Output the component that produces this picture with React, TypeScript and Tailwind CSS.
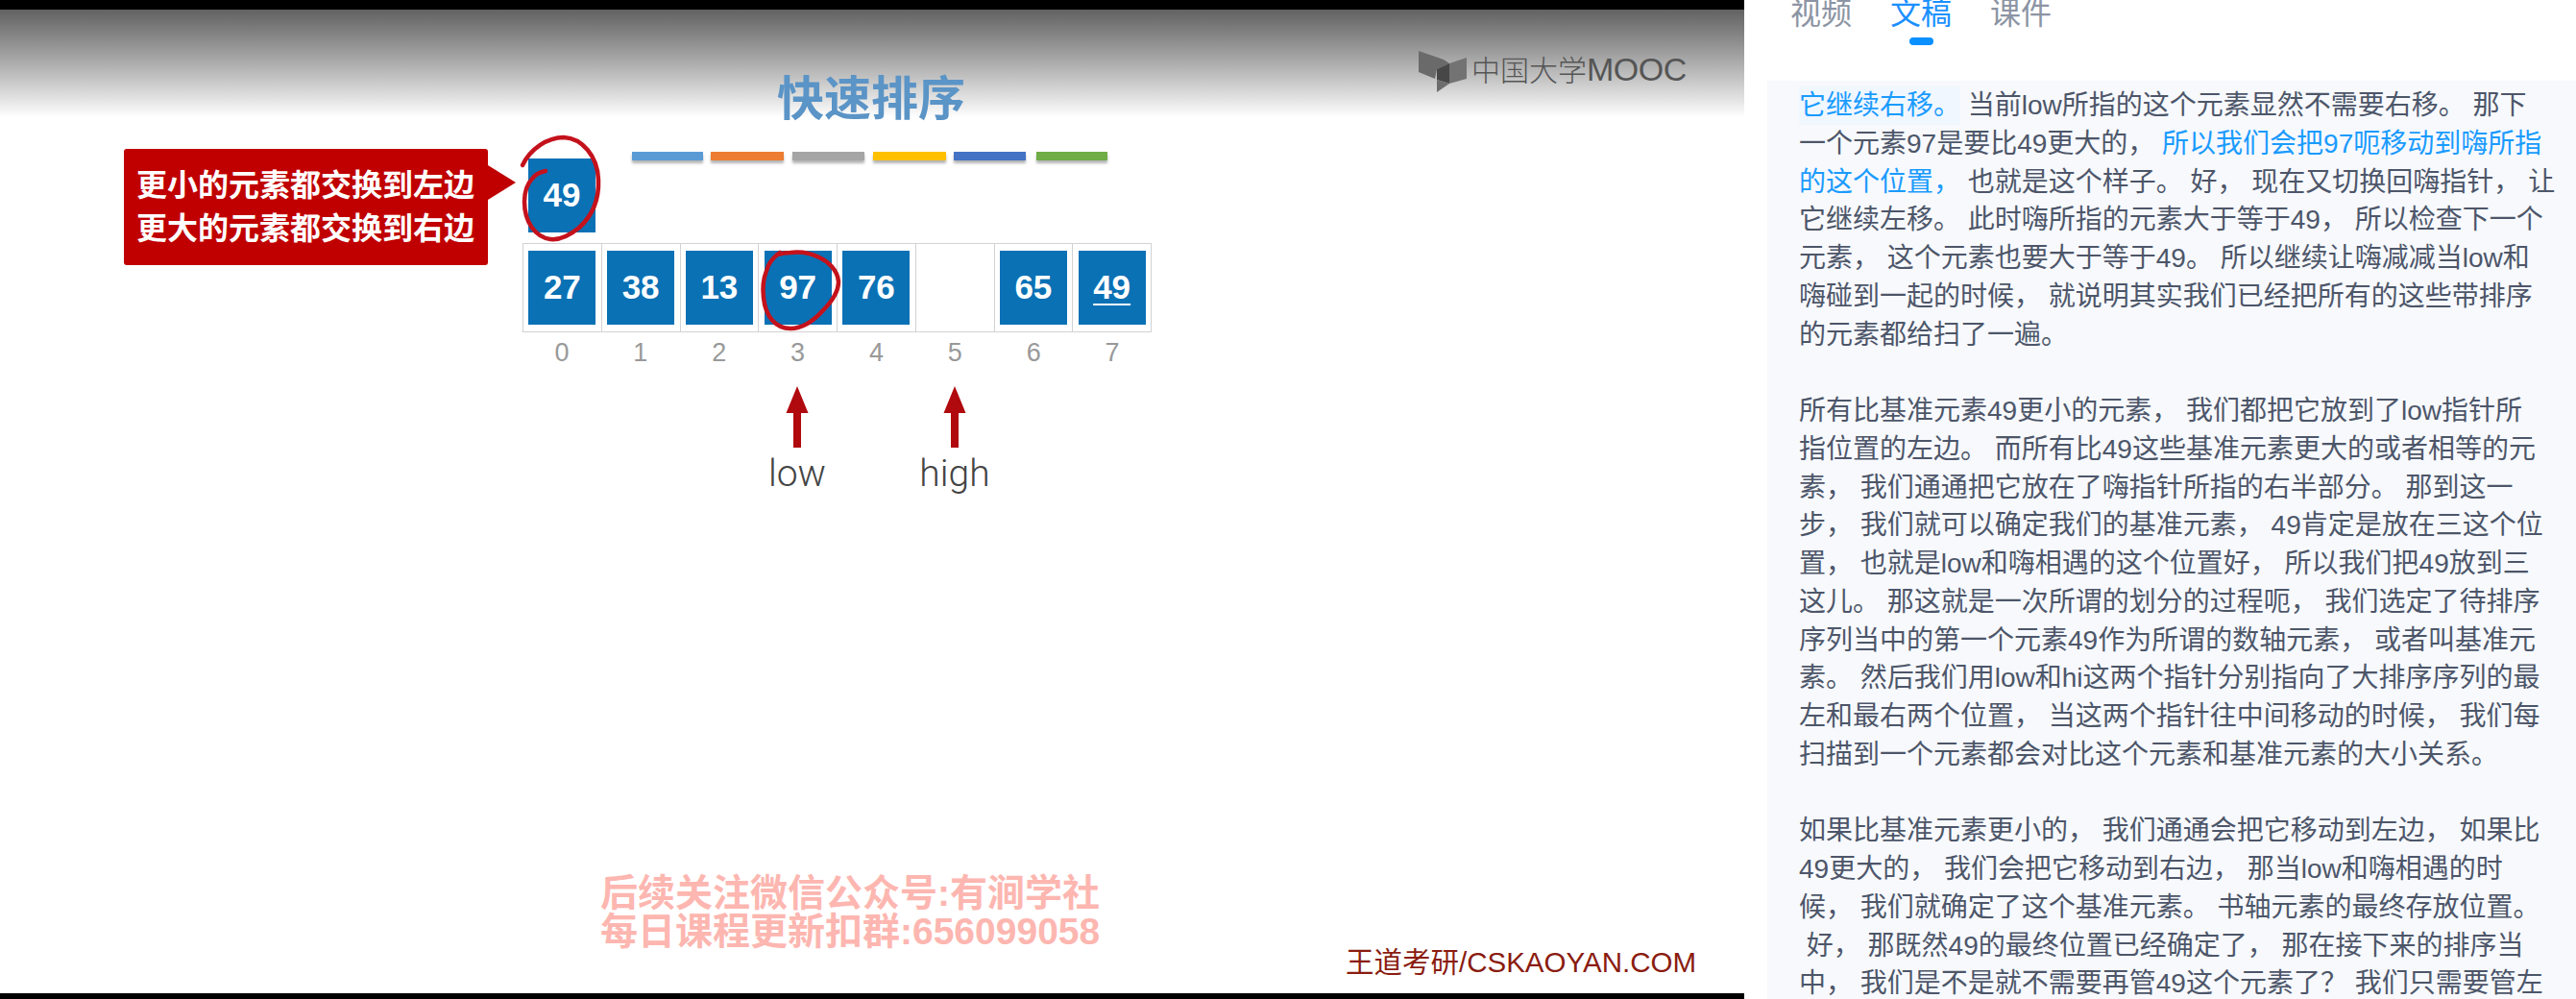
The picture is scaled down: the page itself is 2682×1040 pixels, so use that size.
const cells = ["27", "38", "13", "97", "76", "", "65", "49"];
const bars = [
  { w: "w-[74px]", c: "bg-[#5b9bd5]" },
  { w: "w-[76px] ml-[8px]", c: "bg-[#ed7d31]" },
  { w: "w-[75px] ml-[9px]", c: "bg-[#a5a5a5]" },
  { w: "w-[76px] ml-[9px]", c: "bg-[#ffc000]" },
  { w: "w-[75px] ml-[8px]", c: "bg-[#4472c4]" },
  { w: "w-[74px] ml-[11px]", c: "bg-[#70ad47]" },
];
const para2 = [
  "所有比基准元素49更小的元素， 我们都把它放到了low指针所",
  "指位置的左边。 而所有比49这些基准元素更大的或者相等的元",
  "素， 我们通通把它放在了嗨指针所指的右半部分。 那到这一",
  "步， 我们就可以确定我们的基准元素， 49肯定是放在三这个位",
  "置， 也就是low和嗨相遇的这个位置好， 所以我们把49放到三",
  "这儿。 那这就是一次所谓的划分的过程呃， 我们选定了待排序",
  "序列当中的第一个元素49作为所谓的数轴元素， 或者叫基准元",
  "素。 然后我们用low和hi这两个指针分别指向了大排序序列的最",
  "左和最右两个位置， 当这两个指针往中间移动的时候， 我们每",
  "扫描到一个元素都会对比这个元素和基准元素的大小关系。",
];
const para3 = [
  "如果比基准元素更小的， 我们通通会把它移动到左边， 如果比",
  "49更大的， 我们会把它移动到右边， 那当low和嗨相遇的时",
  "候， 我们就确定了这个基准元素。 书轴元素的最终存放位置。",
  " 好， 那既然49的最终位置已经确定了， 那在接下来的排序当",
  "中， 我们是不是就不需要再管49这个元素了？ 我们只需要管左",
];

function Arrow({ left, label }: { left: string; label: string }) {
  return (
    <div className={`absolute top-[392px] ${left} w-[120px] flex flex-col items-center`}>
      <svg width="24" height="64" viewBox="0 0 24 64">
        <path d="M12 0 L23.5 28 L16 28 L16 64 L8 64 L8 28 L0.5 28 Z" fill="#b00a0f" />
      </svg>
      <span className="font-['Roboto',sans-serif] text-[39px] leading-[44px] mt-[5px] text-[#444444] font-light">{label}</span>
    </div>
  );
}

export default function App() {
  const cjk = "font-['Liberation_Sans','Noto_Sans_CJK_SC',sans-serif]";
  return (
    <div className={`flex w-[2682px] h-[1040px] overflow-hidden bg-white ${cjk}`}>
      <div className="w-[1816px] h-full flex flex-col shrink-0">
        <div className="h-[10px] bg-black shrink-0" />
        <div className="relative flex-1 bg-white overflow-hidden">
          <div className="h-[112px] bg-gradient-to-b from-[#626262] to-white" />

          {/* Title */}
          <div className="absolute left-[809px] top-[66px] text-[49px] leading-[54px] font-bold text-[#5b94c6]">快速排序</div>

          {/* Logo */}
          <div className="absolute left-[1476px] top-[42px] flex items-center">
            <svg width="52" height="46" viewBox="0 0 52 46">
              <path d="M1 1 L27 10 L33 14 L20 20 L18 30 L1 23 Z" fill="#6a6a6a" />
              <path d="M33 14 L51 8 L51 30 L33 35 Z" fill="#737373" />
              <path d="M33 14 L33 35 L20 31 L20 20 Z" fill="#474747" />
              <path d="M20 31 L33 35 L20 44 Z" fill="#6d6d6d" />
            </svg>
            <span className="ml-[4px] text-[30px] leading-[36px] font-light text-[#555555] -mt-[5px] whitespace-nowrap">
              中国大学<span className="text-[34px] tracking-[-0.5px]">MOOC</span>
            </span>
          </div>

          {/* Callout */}
          <div className="absolute left-[129px] top-[145px] w-[379px] h-[121px] bg-[#c00000] rounded-[3px] flex flex-col justify-center pl-[13px] text-white text-[32px] leading-[45px] font-bold whitespace-nowrap">
            <div>更小的元素都交换到左边</div>
            <div>更大的元素都交换到右边</div>
            <div className="absolute left-[379px] top-[17px] w-0 h-0 border-y-[18px] border-y-transparent border-l-[29px] border-l-[#c00000]" />
          </div>

          {/* Pivot */}
          <div className="absolute left-[550px] top-[155px] w-[70px] h-[77px] bg-[#0a71b5] flex items-center justify-center text-white text-[35px] font-bold">49</div>

          {/* Colour bars */}
          <div className="absolute left-[658px] top-[148px] flex">
            {bars.map((b, i) => (
              <div key={i} className={`${b.w} h-[9px] ${b.c} shadow-[0_3px_3px_rgba(0,0,0,0.3)]`} />
            ))}
          </div>

          {/* Array */}
          <div className="absolute left-[544px] top-[243px] w-[655px] h-[93px] flex border border-[#d2d2d2]">
            {cells.map((n, i) => (
              <div key={i} className="flex-1 flex items-center justify-center border-r border-[#d2d2d2] last:border-r-0">
                {n && (
                  <div className="w-[70px] h-[77px] bg-[#0a71b5] flex items-center justify-center text-white text-[35px] font-bold">
                    <span className={i === 7 ? "underline underline-offset-[5px] decoration-[2px]" : ""}>{n}</span>
                  </div>
                )}
              </div>
            ))}
          </div>
          {/* Indices */}
          <div className="absolute left-[544px] top-[340px] w-[655px] flex text-[27px] leading-[34px] text-[#999999]">
            {cells.map((_, i) => (
              <div key={i} className="flex-1 text-center">{i}</div>
            ))}
          </div>

          <Arrow left="left-[770px]" label="low" />
          <Arrow left="left-[934px]" label="high" />

          {/* Ink */}
          <svg className="absolute left-0 top-0" width="1816" height="1024" viewBox="0 10 1816 1024" fill="none" stroke="#c4121c" strokeWidth="4.5" strokeLinecap="round">
            <path d="M544 172 C552 155 570 143 587 143 C606 144 622 162 623 187 C624 210 615 226 603 237 C592 246 582 250 573 249 C558 247 546 232 546 210 C546 198 550 190 555 185 C559 180 563 179 568 178" />
            <path d="M812 263 C805 268 800 274 798 282 C794 292 794 302 795 310 C797 330 808 342 823 342 C836 342 848 333 857 323 C866 314 873 304 873 293 C872 281 862 272 853 268 C843 263 832 262 823 263 C818 263 813 264 809 265" />
          </svg>

          {/* Watermark */}
          <div className="absolute left-[625px] top-[900px] text-[39px] leading-[40px] font-bold text-[#fdb6b0] whitespace-nowrap">
            <div>后续关注微信公众号:有涧学社</div>
            <div>每日课程更新扣群:656099058</div>
          </div>

          {/* Credit */}
          <div className="absolute left-[1401px] top-[974px] text-[29.5px] leading-[36px] text-[#8a1c10] whitespace-nowrap">王道考研/CSKAOYAN.COM</div>
        </div>
        <div className="h-[6px] bg-black shrink-0" />
      </div>

      <div className="flex-1 flex flex-col min-w-0">
        <div className="h-[84px] shrink-0 overflow-hidden pl-[48px]">
          <div className="flex gap-[40px] -mt-[4px] text-[32px] leading-[36px] text-[#8c94a3]">
            <span>视频</span>
            <span className="relative text-[#1a90ff]">
              文稿
              <span className="absolute left-[20px] top-[43px] w-[25px] h-[8px] rounded-full bg-[#0a90ff]" />
            </span>
            <span>课件</span>
          </div>
        </div>
        <div className="flex-1 ml-[24px] bg-[#f7f9fd] pl-[33px] pt-[6px] text-[28px] leading-[39.75px] text-[#4d5669] whitespace-pre overflow-hidden">
          <div>
            <span className="inline-block bg-[#f0f7ff] text-[#1a9bff]">它继续右移。</span> 当前low所指的这个元素显然不需要右移。 那下
          </div>
          <div>
            一个元素97是要比49更大的， <span className="text-[#1a9bff]">所以我们会把97呃移动到嗨所指</span>
          </div>
          <div>
            <span className="text-[#1a9bff]">的这个位置，</span> 也就是这个样子。 好， 现在又切换回嗨指针， 让
          </div>
          <div>它继续左移。 此时嗨所指的元素大于等于49， 所以检查下一个</div>
          <div>元素， 这个元素也要大于等于49。 所以继续让嗨减减当low和</div>
          <div>嗨碰到一起的时候， 就说明其实我们已经把所有的这些带排序</div>
          <div>的元素都给扫了一遍。</div>
          <div className="h-[39.75px]" />
          {para2.map((l, i) => (
            <div key={i}>{l}</div>
          ))}
          <div className="h-[39.75px]" />
          {para3.map((l, i) => (
            <div key={i}>{l}</div>
          ))}
        </div>
      </div>
    </div>
  );
}
